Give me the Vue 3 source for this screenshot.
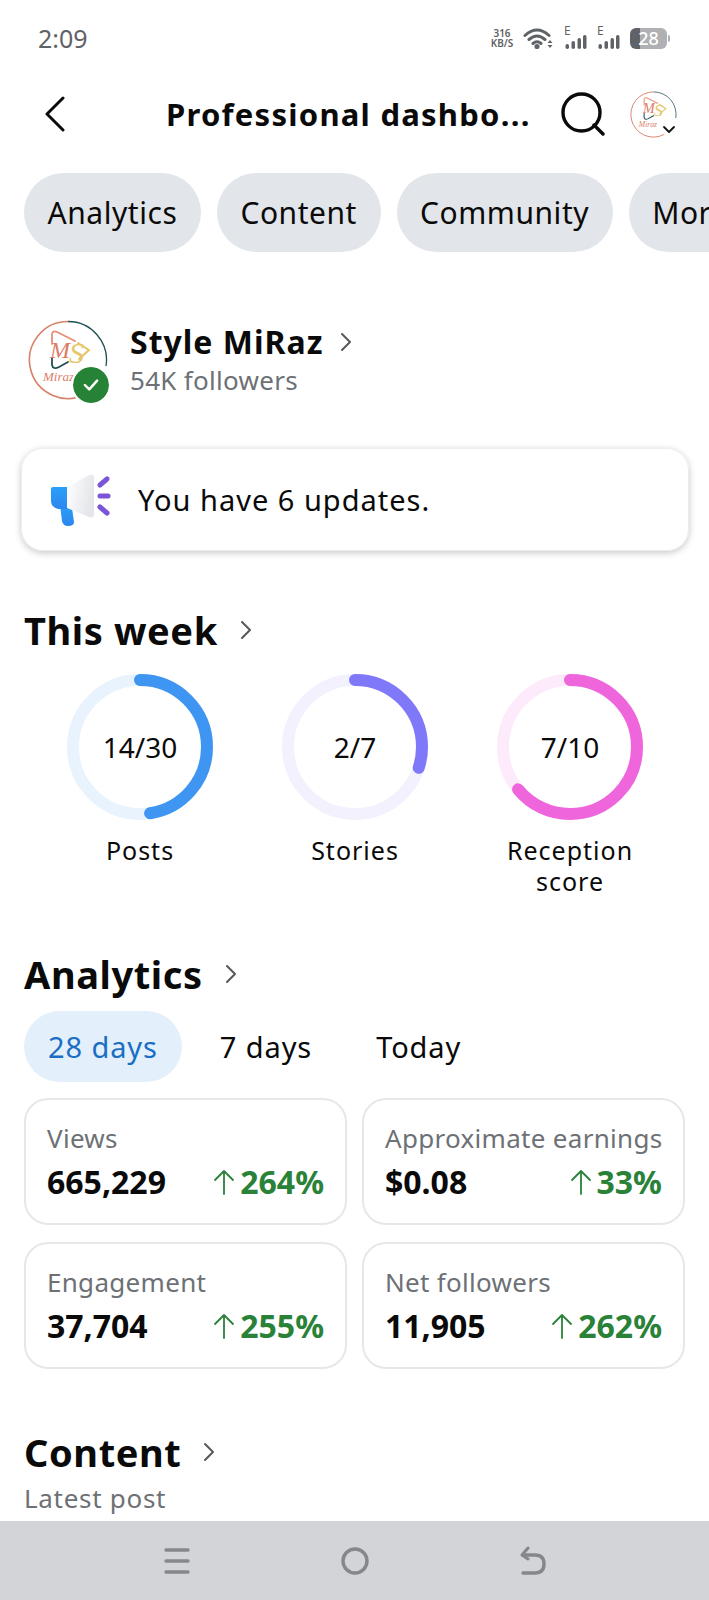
<script setup>
const chips = ['Analytics', 'Content', 'Community', 'More']
const periods = ['28 days', '7 days', 'Today']

const radius = 67
const circumference = 2 * Math.PI * radius
// arc lengths are read off the screenshot, they don't follow the fractions exactly
const rings = [
  { value: '14/30', label: 'Posts', ratio: 0.475, color: '#3f96f2', track: '#e8f3fd' },
  { value: '2/7', label: 'Stories', ratio: 0.3, color: '#7f78f8', track: '#f3f1fd' },
  { value: '7/10', label: 'Reception score', ratio: 0.64, color: '#ef66dc', track: '#fdeafb' },
]

const stats = [
  { label: 'Views', value: '665,229', change: '264%' },
  { label: 'Approximate earnings', value: '$0.08', change: '33%' },
  { label: 'Engagement', value: '37,704', change: '255%' },
  { label: 'Net followers', value: '11,905', change: '262%' },
]
</script>

<template>
  <div class="screen">
    <svg class="defs" width="0" height="0">
      <defs>
        <symbol id="ms-logo" viewBox="0 0 80 80">
          <path d="M40 1.500A38.500 38.500 0 0 1 78 46" fill="none" stroke="#1f4f55" stroke-width="1.300" />
          <path d="M40 1.500A38.500 38.500 0 1 0 58 74" fill="none" stroke="#d9806a" stroke-width="1.600" />
          <path d="M24 24V15Q24 10 29 12L47 21" fill="none" stroke="#e58f78" stroke-width="1.800" stroke-linecap="round" />
          <path d="M24 38V45Q25 50 31 47L40 42" fill="none" stroke="#1f4f55" stroke-width="1.800" stroke-linecap="round" />
          <path d="M50 23L61 30L51 39" fill="none" stroke="#e2c15a" stroke-width="1.800" stroke-linecap="round" />
          <text x="22" y="38" class="logo-m">M</text>
          <text x="41" y="43" class="logo-s">S</text>
          <text x="15" y="61" class="logo-name">Miraz</text>
        </symbol>
      </defs>
    </svg>

    <main class="content">
      <div class="status">
        <span class="time">2:09</span>
        <div class="status-icons">
          <span class="speed">316<br>KB/S</span>
          <svg class="wifi" viewBox="0 0 30 22" width="30" height="22">
            <path d="M2 8.500Q14-2.500 26 8.500M6 12.500Q14 5.500 22 12.500M10 16.500Q14 13 18 16.500" fill="none" stroke="#5f6266" stroke-width="3" stroke-linecap="round" />
            <circle cx="14" cy="19.500" r="2.600" fill="#5f6266" />
            <path d="M24.500 16L27 13L29.500 16ZM24.500 18L27 21L29.500 18Z" fill="#5f6266" />
          </svg>
          <div v-for="n in 2" :key="n" class="signal">
            <span class="signal-e">E</span>
            <svg viewBox="0 0 23 14" width="23" height="14">
              <rect x="1.500" y="9" width="3.500" height="5" rx="1.700" fill="#5f6266" />
              <rect x="7.500" y="6" width="3.500" height="8" rx="1.700" fill="#5f6266" />
              <rect x="13.500" y="3" width="3.500" height="11" rx="1.700" fill="#5f6266" />
              <rect x="19" y="0" width="3.500" height="14" rx="1.700" fill="#5f6266" />
            </svg>
          </div>
          <div class="battery"><span class="battery-text">28</span></div>
          <span class="battery-tip"></span>
        </div>
      </div>

      <header class="topbar">
        <svg class="back" viewBox="0 0 22 36" width="22" height="36">
          <path d="M19 2L3 18L19 34" fill="none" stroke="#0a0a0a" stroke-width="3" stroke-linecap="round" stroke-linejoin="round" />
        </svg>
        <h1 class="title">Professional dashbo...</h1>
        <svg class="search" viewBox="0 0 44 44" width="44" height="44">
          <circle cx="20.500" cy="20.500" r="18.500" fill="none" stroke="#0a0a0a" stroke-width="3.400" />
          <path d="M33 33L42 42" stroke="#0a0a0a" stroke-width="3.400" stroke-linecap="round" />
        </svg>
        <div class="account">
          <svg viewBox="0 0 80 80" width="47" height="47"><use href="#ms-logo" /></svg>
          <svg class="account-caret" viewBox="0 0 14 9" width="14" height="9">
            <path d="M2 2L7 7L12 2" fill="none" stroke="#111" stroke-width="1.800" stroke-linecap="round" stroke-linejoin="round" />
          </svg>
        </div>
      </header>

      <nav class="chips">
        <span v-for="chip in chips" :key="chip" class="chip">{{ chip }}</span>
      </nav>

      <section class="profile">
        <div class="profile-avatar">
          <svg viewBox="0 0 80 80" width="80" height="80"><use href="#ms-logo" /></svg>
          <span class="verified">
            <svg viewBox="0 0 20 16" width="18" height="14">
              <path d="M3 8L8 13L17 3" fill="none" stroke="#fff" stroke-width="2.800" stroke-linecap="round" stroke-linejoin="round" />
            </svg>
          </span>
        </div>
        <div>
          <div class="profile-name">
            Style MiRaz
            <svg class="chevron" viewBox="0 0 12 20" width="12" height="20">
              <path d="M2 2L10 10L2 18" fill="none" stroke="#55585c" stroke-width="2" stroke-linecap="round" stroke-linejoin="round" />
            </svg>
          </div>
          <div class="profile-followers">54K followers</div>
        </div>
      </section>

      <section class="updates">
        <svg viewBox="0 0 62 54" width="62" height="54">
          <defs>
            <linearGradient id="cone" x1="0" y1="0" x2="1" y2="0.300">
              <stop offset="0" stop-color="#ffffff" />
              <stop offset="1" stop-color="#e4e6ea" />
            </linearGradient>
            <linearGradient id="blue" x1="0" y1="0" x2="0" y2="1">
              <stop offset="0" stop-color="#2aa0f7" />
              <stop offset="1" stop-color="#2c86f0" />
            </linearGradient>
          </defs>
          <path d="M11 32L23 35L25 49Q25 53 19 53Q14 53 13 48Z" fill="url(#blue)" />
          <path d="M4 14H19V36H9Q2 34 2 28V16Q2 14 4 14Z" fill="url(#blue)" />
          <path d="M18 14L40 2Q45 0 45 5V41Q45 46 40 44L18 35Z" fill="url(#cone)" />
          <g stroke="#7a55d8" stroke-width="5" stroke-linecap="round">
            <path d="M51 12L58 6" />
            <path d="M51 23H59" />
            <path d="M51 34L58 40" />
          </g>
        </svg>
        <span class="updates-text">You have 6 updates.</span>
      </section>

      <section class="week">
        <h2 class="heading">
          This week
          <svg class="chevron" viewBox="0 0 12 20" width="12" height="20">
            <path d="M2 2L10 10L2 18" fill="none" stroke="#55585c" stroke-width="2" stroke-linecap="round" stroke-linejoin="round" />
          </svg>
        </h2>
        <div class="rings">
          <div v-for="ring in rings" :key="ring.label" class="ring">
            <div class="ring-graphic">
              <svg viewBox="0 0 146 146" width="146" height="146">
                <circle cx="73" cy="73" :r="radius" fill="none" :stroke="ring.track" stroke-width="12" />
                <circle
                  cx="73"
                  cy="73"
                  :r="radius"
                  fill="none"
                  :stroke="ring.color"
                  stroke-width="12"
                  stroke-linecap="round"
                  :stroke-dasharray="`${ring.ratio * circumference} ${circumference}`"
                  transform="rotate(-90 73 73)"
                />
              </svg>
              <span class="ring-value">{{ ring.value }}</span>
            </div>
            <div class="ring-label">{{ ring.label }}</div>
          </div>
        </div>
      </section>

      <section class="analytics">
        <h2 class="heading">
          Analytics
          <svg class="chevron" viewBox="0 0 12 20" width="12" height="20">
            <path d="M2 2L10 10L2 18" fill="none" stroke="#55585c" stroke-width="2" stroke-linecap="round" stroke-linejoin="round" />
          </svg>
        </h2>
        <div class="periods">
          <span v-for="(period, i) in periods" :key="period" class="period" :class="{ active: i === 0 }">{{ period }}</span>
        </div>
        <div class="stats">
          <div v-for="stat in stats" :key="stat.label" class="stat">
            <div class="stat-label">{{ stat.label }}</div>
            <div class="stat-row">
              <span class="stat-value">{{ stat.value }}</span>
              <span class="stat-change">
                <svg viewBox="0 0 22 28" width="22" height="28">
                  <path d="M11 26V3M2 12L11 3L20 12" fill="none" stroke="#2a8239" stroke-width="1.800" stroke-linecap="round" stroke-linejoin="round" />
                </svg>
                {{ stat.change }}
              </span>
            </div>
          </div>
        </div>
      </section>

      <section class="latest">
        <h2 class="heading">
          Content
          <svg class="chevron" viewBox="0 0 12 20" width="12" height="20">
            <path d="M2 2L10 10L2 18" fill="none" stroke="#55585c" stroke-width="2" stroke-linecap="round" stroke-linejoin="round" />
          </svg>
        </h2>
        <div class="latest-label">Latest post</div>
      </section>
    </main>

    <footer class="navbar">
      <svg viewBox="0 0 26 28" width="26" height="28">
        <path d="M2 3H24M2 14H24M2 25H24" stroke="#85878b" stroke-width="3.400" stroke-linecap="round" />
      </svg>
      <svg viewBox="0 0 30 30" width="30" height="30">
        <circle cx="15" cy="15" r="12" fill="none" stroke="#85878b" stroke-width="3.400" />
      </svg>
      <svg viewBox="0 0 28 30" width="28" height="30">
        <path d="M4 27H16Q25 27 25 18Q25 9 16 9H4" fill="none" stroke="#85878b" stroke-width="3.400" stroke-linecap="round" />
        <path d="M9 2L3 9L9 13" fill="none" stroke="#85878b" stroke-width="3" stroke-linecap="round" stroke-linejoin="round" />
      </svg>
    </footer>
  </div>
</template>

<style>
html,
body {
  margin: 0;
  background: #fff;
}
</style>

<style scoped>
.screen {
  width: 709px;
  height: 1600px;
  display: flex;
  flex-direction: column;
  overflow: hidden;
  background: #fff;
  color: #0a0a0a;
  font-family: "Noto Sans", "Open Sans", sans-serif;
}

.defs {
  position: absolute;
}

.logo-m {
  font: italic 400 24px "Liberation Serif", serif;
  fill: #dd7b66;
}

.logo-s {
  font: italic 400 30px "Liberation Serif", serif;
  fill: #e6c768;
}

.logo-name {
  font: italic 400 13px "Liberation Serif", serif;
  fill: #d9806a;
}

.content {
  flex: 1;
  min-height: 0;
  overflow: hidden;
}

.status {
  height: 22px;
  padding: 27px 39px 0 38px;
  display: flex;
  align-items: center;
  justify-content: space-between;
}

.time {
  font-size: 25px;
  color: #5f6266;
}

.status-icons {
  display: flex;
  align-items: center;
}

.speed {
  width: 24px;
  margin-right: 9px;
  font-size: 10px;
  font-weight: 600;
  line-height: 10px;
  text-align: center;
  white-space: nowrap;
  color: #5f6266;
}

.wifi {
  margin-right: 11px;
}

.signal {
  position: relative;
  width: 23px;
  height: 22px;
  margin-right: 10px;
  display: flex;
  align-items: flex-end;
}

.signal-e {
  position: absolute;
  left: 0;
  top: -3px;
  font-size: 12px;
  line-height: 14px;
  color: #5f6266;
}

.battery {
  box-sizing: border-box;
  width: 37px;
  height: 21px;
  border-radius: 6px;
  background: linear-gradient(to right, #5f6266 10px, #aeb0b3 10px);
  text-align: center;
  font-size: 18px;
  font-weight: 500;
  line-height: 21px;
  color: #fff;
}

.battery-tip {
  width: 2px;
  height: 7px;
  margin-left: 1px;
  border-radius: 0 2px 2px 0;
  background: #aeb0b3;
}

.topbar {
  height: 50px;
  margin-top: 40px;
  padding: 0 31px 0 44px;
  display: flex;
  align-items: center;
}

.title {
  margin: 0 0 0 100px;
  width: 395px;
  font-size: 31px;
  font-weight: 700;
  letter-spacing: 1.25px;
  white-space: nowrap;
}

.search {
  flex: none;
}

.account {
  position: relative;
  margin-left: 25px;
  height: 47px;
}

.account-caret {
  position: absolute;
  right: 1px;
  bottom: 4px;
  background: #fff;
}

.chips {
  margin-top: 34px;
  padding-left: 24px;
  display: flex;
  gap: 16px;
  white-space: nowrap;
}

.chip {
  flex: none;
  height: 79px;
  padding: 0 23.500px;
  display: flex;
  align-items: center;
  border-radius: 40px;
  background: #e2e5e9;
  font-size: 30px;
  letter-spacing: 0.55px;
}

.profile {
  margin-top: 68px;
  padding-left: 28px;
  display: flex;
  align-items: center;
  gap: 22px;
}

.profile-avatar {
  position: relative;
  width: 80px;
  height: 80px;
}

.verified {
  position: absolute;
  left: 45px;
  top: 47px;
  width: 36px;
  height: 36px;
  display: flex;
  align-items: center;
  justify-content: center;
  border-radius: 50%;
  background: #268235;
  outline: 2px solid #fff;
}

.profile-name {
  font-size: 32px;
  font-weight: 700;
  letter-spacing: 1px;
  line-height: 38px;
  display: flex;
  align-items: center;
}

.profile-name .chevron {
  margin-left: 17px;
}

.profile-followers {
  margin-top: 2px;
  font-size: 26px;
  letter-spacing: 0.3px;
  line-height: 34px;
  color: #6d7175;
}

.updates {
  margin: 48px 20px 0 21px;
  height: 101px;
  padding-left: 27px;
  display: flex;
  align-items: center;
  gap: 27px;
  border: 1px solid #eceded;
  border-radius: 22px;
  box-shadow: 0 2px 7px rgba(0, 0, 0, 0.22);
}

.updates-text {
  font-size: 29px;
  letter-spacing: 1px;
}

.heading {
  margin: 0;
  font-size: 38px;
  font-weight: 700;
  letter-spacing: 0.6px;
  line-height: 46px;
  display: flex;
  align-items: center;
  gap: 22px;
}

.week {
  margin-top: 56px;
  padding-left: 24px;
}

.rings {
  margin-top: 21px;
  display: flex;
  padding-left: 43px;
  gap: 69px;
}

.ring {
  width: 146px;
  text-align: center;
}

.ring-graphic {
  position: relative;
  height: 146px;
}

.ring-value {
  position: absolute;
  inset: 0;
  display: flex;
  align-items: center;
  justify-content: center;
  font-size: 28px;
}

.ring-label {
  margin-top: 15px;
  font-size: 25px;
  letter-spacing: 1px;
  line-height: 31px;
}

.analytics {
  margin-top: 54px;
  padding: 0 24px;
}

.periods {
  margin-top: 14px;
  display: flex;
  gap: 12px;
}

.period {
  height: 71px;
  padding: 0 26px;
  display: flex;
  align-items: center;
  border-radius: 36px;
  font-size: 29px;
  letter-spacing: 0.9px;
}

.period.active {
  padding: 0 24px;
  background: #e3f0fc;
  color: #1a6ec4;
}

.stats {
  margin-top: 16px;
  display: grid;
  grid-template-columns: 323px 323px;
  gap: 17px 15px;
}

.stat {
  box-sizing: border-box;
  height: 127px;
  padding: 21px 21px 0;
  border: 2px solid #e6e7e9;
  border-radius: 24px;
}

.stat-label {
  font-size: 26px;
  letter-spacing: 0.3px;
  line-height: 34px;
  color: #6d7175;
  white-space: nowrap;
}

.stat-row {
  margin-top: 7px;
  display: flex;
  align-items: center;
  justify-content: space-between;
}

.stat-value {
  font-size: 32px;
  font-weight: 700;
  line-height: 40px;
}

.stat-change {
  display: flex;
  align-items: center;
  gap: 5px;
  font-size: 32px;
  font-weight: 700;
  line-height: 40px;
  color: #2a8239;
}

.latest {
  margin-top: 60px;
  padding-left: 24px;
}

.latest-label {
  margin-top: 6px;
  font-size: 26px;
  letter-spacing: 0.7px;
  line-height: 34px;
  color: #6d7175;
}

.navbar {
  flex: none;
  height: 79px;
  display: flex;
  align-items: center;
  justify-content: space-between;
  padding: 0 162px 0 164px;
  background: #d3d4d8;
}
</style>
